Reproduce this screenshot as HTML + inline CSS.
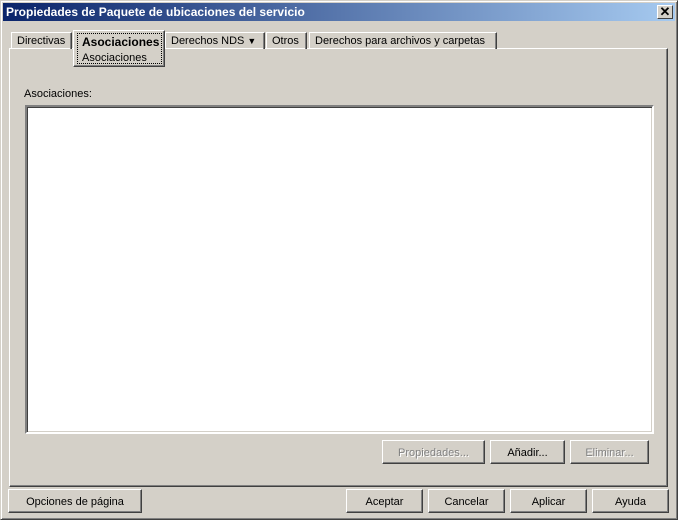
<!DOCTYPE html><html><head><style>
*{box-sizing:border-box}body{margin:0;width:678px;height:520px;background:#d4d0c8;font-family:"Liberation Sans",sans-serif;font-size:11px;position:relative;overflow:hidden}
.a{position:absolute}
.win{left:0;top:0;width:678px;height:520px;border:1px solid;border-color:#d4d0c8 #404040 #404040 #d4d0c8;box-shadow:inset 1px 1px #fff,inset -1px -1px #808080}
.title{left:3px;top:3px;width:672px;height:18px;background:linear-gradient(90deg,#0a246a,#a6caf0);color:#fff;font-weight:bold;font-size:12px;line-height:19px;padding-left:3px}
.x{left:657px;top:5px;width:16px;height:14px;background:#d4d0c8;border:1px solid;border-color:#fff #404040 #404040 #fff;font-size:13px;font-weight:bold;text-align:center;line-height:12px;color:#000}
.panel{left:9px;top:48px;width:659px;height:439px;border:1px solid;border-color:#fff #404040 #404040 #fff;box-shadow:inset -1px -1px #808080}
.tab{top:32px;height:17px;border:1px solid;border-bottom:none;border-color:#fff #404040 #fff #fff;line-height:17px;padding:0 5px;color:#000;box-shadow:inset -1px 0 #808080}
.btn{height:24px;border:1px solid;border-color:#fff #404040 #404040 #fff;box-shadow:inset -1px -1px #808080;text-align:center;line-height:24px;color:#000}
.dis{color:#808080;text-shadow:1px 1px #fff}
.list{left:25px;top:105px;width:629px;height:329px;background:#fff;border:2px solid;border-color:#808080 #fff #fff #808080;box-shadow:inset 1px 1px #404040,inset -1px -1px #d4d0c8}
</style></head><body>
<div class="a win"></div>
<div class="a title">Propiedades de Paquete de ubicaciones del servicio</div>
<div class="a x">✕</div>
<div class="a panel"></div>
<div class="a tab" style="left:11px;width:61px">Directivas</div>
<div class="a tab" style="left:266px;width:41px">Otros</div>
<div class="a tab" style="left:309px;width:188px">Derechos para archivos y carpetas</div>
<div class="a tab" style="left:165px;width:100px">Derechos NDS <span style="font-size:9px">▼</span></div>
<div class="a" style="left:73px;top:30px;width:92px;height:37px;background:#d4d0c8;border:1px solid;border-color:#fff #404040 #404040 #fff;box-shadow:inset -1px -1px #808080"></div>
<div class="a" style="left:77px;top:33px;width:85px;height:31px;border:1px dotted #000;padding-left:4px;padding-top:1px;line-height:15px;color:#000"><b style="font-size:12px">Asociaciones</b><br>Asociaciones</div>
<div class="a" style="left:24px;top:88px">Asociaciones:</div>
<div class="a list"></div>
<div class="a btn dis" style="left:382px;top:440px;width:103px">Propiedades...</div>
<div class="a btn" style="left:490px;top:440px;width:75px">Añadir...</div>
<div class="a btn dis" style="left:570px;top:440px;width:79px">Eliminar...</div>
<div class="a btn" style="left:8px;top:489px;width:134px">Opciones de página</div>
<div class="a btn" style="left:346px;top:489px;width:77px">Aceptar</div>
<div class="a btn" style="left:428px;top:489px;width:77px">Cancelar</div>
<div class="a btn" style="left:510px;top:489px;width:77px">Aplicar</div>
<div class="a btn" style="left:592px;top:489px;width:77px">Ayuda</div>
</body></html>
